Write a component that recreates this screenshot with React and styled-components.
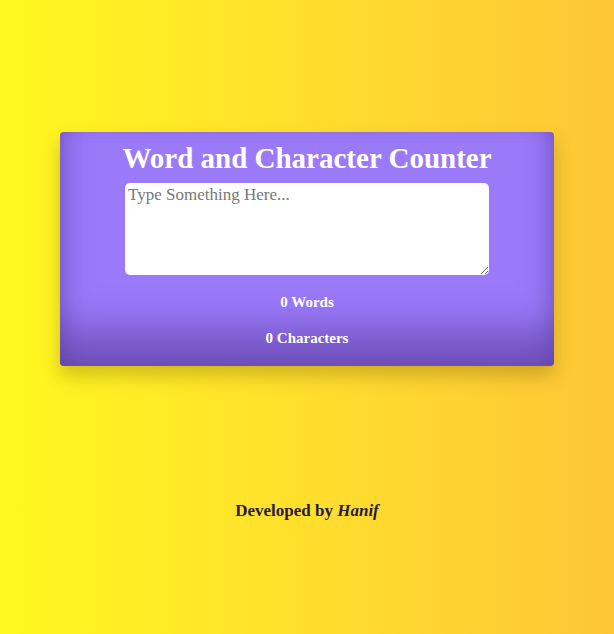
import React, { useState } from "react";
import styled, { createGlobalStyle } from "styled-components";

const Global = createGlobalStyle`
  html, body { margin: 0; padding: 0; }
  body {
    min-height: 634px;
    background: linear-gradient(to right, #fff81f, #ffdc2e 55%, #fdc636);
    font-family: "Liberation Serif", "Times New Roman", serif;
  }
`;

const Page = styled.div`
  display: flex;
  flex-direction: column;
  align-items: center;
  padding-top: 132px;
`;

const Card = styled.div`
  width: 494px;
  box-sizing: border-box;
  background: #9b7afa;
  border-radius: 4px;
  padding: 10px 0 19px;
  display: flex;
  flex-direction: column;
  align-items: center;
  box-shadow: inset 0 -45px 40px -10px rgba(60, 30, 110, 0.45),
    inset 12px 0 20px -10px rgba(60, 30, 110, 0.25),
    inset -12px 0 20px -10px rgba(60, 30, 110, 0.25),
    0 10px 18px rgba(90, 70, 0, 0.28);
`;

const Title = styled.h1`
  margin: 0 0 8px;
  font-size: 29px;
  line-height: 33px;
  font-weight: bold;
  color: #fff;
`;

const Input = styled.textarea`
  width: 364px;
  height: 92px;
  box-sizing: border-box;
  border: none;
  border-radius: 5px;
  padding: 2px 3px;
  font-family: "Liberation Serif", "Times New Roman", serif;
  font-size: 17px;
  outline: none;
  &::placeholder { color: #777; }
`;

const Stat = styled.p`
  margin: ${(p) => p.$top}px 0 0;
  font-size: 15px;
  line-height: 18px;
  font-weight: bold;
  color: #fff;
`;

const Footer = styled.p`
  margin: 135px 0 0;
  font-size: 17px;
  font-weight: bold;
  color: #2a1b3c;
`;

export default function App() {
  const [text, setText] = useState("");
  const words = text.trim() ? text.trim().split(/\s+/).length : 0;
  return (
    <>
      <Global />
      <Page>
        <Card>
          <Title>Word and Character Counter</Title>
          <Input
            placeholder="Type Something Here..."
            value={text}
            onChange={(e) => setText(e.target.value)}
          />
          <Stat $top={18}>{words} Words</Stat>
          <Stat $top={18}>{text.length} Characters</Stat>
        </Card>
        <Footer>
          Developed by <i>Hanif</i>
        </Footer>
      </Page>
    </>
  );
}
